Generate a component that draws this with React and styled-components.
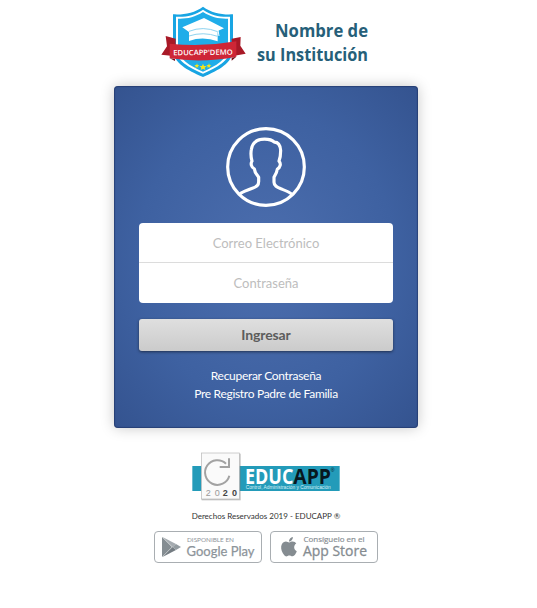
import React from "react";
import styled, { createGlobalStyle } from "styled-components";

const GlobalStyle = createGlobalStyle`
  *, *::before, *::after { box-sizing: border-box; }
  body { margin: 0; background: #fff; font-family: Lato, "Liberation Sans", sans-serif; }
  svg { display: block; flex: none; overflow: visible; }
`;

const Page = styled.main`
  width: 532px;
  height: 608px;
  display: flex;
  flex-direction: column;
  align-items: center;
`;

const Header = styled.header`
  height: 86px;
  width: 222px;
  display: flex;
  padding-top: 2px;
`;

const Card = styled.form`
  width: 304px;
  height: 342px;
  display: flex;
  flex-direction: column;
  align-items: center;
  padding: 41px 25px 0;
  border-radius: 4px;
  background: radial-gradient(ellipse farthest-corner at center, #4c6eae 0%, #3e61a1 60%, #34538f 100%);
  box-shadow: inset 0 0 1px 1px rgba(27, 46, 92, 0.55), 0 0 14px rgba(0, 0, 0, 0.22);
`;

const Fields = styled.div`
  width: 254px;
  height: 80px;
  margin-top: 16px;
  background: #fff;
  border-radius: 4px;
  overflow: hidden;
`;

const Field = styled.input`
  display: block;
  width: 100%;
  height: 40px;
  padding: 0 8px;
  border: 0;
  border-bottom: ${(p) => (p.$divided ? "1px solid #dcdcdc" : "0")};
  outline: none;
  background: transparent;
  text-align: center;
  font: 13px Lato, sans-serif;
  color: #555;
  &::placeholder { color: #bdbdbd; opacity: 1; }
`;

const SubmitButton = styled.button`
  width: 254px;
  height: 32px;
  margin-top: 16px;
  padding: 0 0 2px;
  border: 0;
  border-radius: 3px;
  background: linear-gradient(#dfdfdf, #cbcbcb);
  box-shadow: 0 1px 3px rgba(0, 0, 0, 0.5);
  font: bold 14px Lato, sans-serif;
  letter-spacing: -0.1px;
  color: #5c5c5c;
`;

const Links = styled.nav`
  display: flex;
  flex-direction: column;
  align-items: center;
  margin-top: 16px;
`;

const CardLink = styled.a`
  font-size: 12px;
  line-height: 18px;
  letter-spacing: -0.3px;
  color: #fff;
`;

const Footer = styled.footer`
  display: flex;
  flex-direction: column;
  align-items: center;
  padding-top: 24px;
`;

const Copyright = styled.p`
  margin: 6px 0 0;
  font-size: 8px;
  line-height: 12px;
  color: #333;
`;

const Stores = styled.div`
  display: flex;
  gap: 8px;
  margin-top: 9px;
`;

const StoreBadge = styled.a`
  width: 108px;
  height: 32px;
  border: 1px solid #a9aeb2;
  border-radius: 4px;
  background: #fff;
`;

function Emblem() {
  return (
    <svg width="100" height="82" viewBox="2 6 300 246">
      <path d="M146 20C120 39 88 45 56 43V150C58 190 98 210 146 231C194 210 234 190 236 150V43C204 45 172 39 146 20Z" fill="#18a5e3" />
      <path d="M146 29C121 46 94 52 65 50V150C67 182 102 202 146 221C190 202 225 182 227 150V50C198 52 171 46 146 29Z" fill="#fff" />
      <path d="M146 36C121 52 96 57 71 56V150C74 178 106 197 146 215C186 197 218 178 221 150V56C196 57 171 52 146 36Z" fill="#20ade9" />
      <path d="M84 82L149 54L209 85L190 93V124Q146 108 104 123V96Z" fill="#fff" />
      <path d="M104 94Q146 77 190 95M104 108Q146 94 190 109" fill="none" stroke="#8fd3ef" strokeWidth="3" />
      <path d="M191 90L194 108" stroke="#fff" strokeWidth="3" />
      <path d="M34 108L64 116V169L21 164L38 139Z" fill="#a81927" />
      <path d="M259 111L232 116V169L274 161L258 137Z" fill="#a81927" />
      <path d="M46 131Q146 142 246 124V170Q146 190 46 175Z" fill="#ce2636" />
      <path d="M46 175L62 177V183ZM246 170L232 173V182Z" fill="#74101b" />
      <text x="57" y="165" fontFamily="Open Sans, sans-serif" fontWeight="600" fontSize="22" fill="#fff" textLength="178" lengthAdjust="spacingAndGlyphs" transform="rotate(-.7 146 160)">EDUCAPP'DEMO</text>
      <g fill="#f5e51b">
        <path d="M146 191L149 198L157 198L151 203L153 210L146 206L139 210L141 203L135 198L143 198Z" />
        <path d="M128 190L130 195L135 195L131 199L132 204L128 201L123 204L124 199L120 195L126 195Z" />
        <path d="M164 190L166 195L171 195L167 199L168 204L164 201L159 204L160 199L156 195L162 195Z" />
      </g>
    </svg>
  );
}

function Wordmark() {
  return (
    <svg width="122" height="78" viewBox="0 0 122 78" fontFamily="Open Sans, sans-serif" fontWeight="700" fontSize="18.5" fill="#265f79">
      <text x="20" y="35" textLength="93" lengthAdjust="spacingAndGlyphs">Nombre de</text>
      <text x="2" y="59" textLength="111" lengthAdjust="spacingAndGlyphs">su Institución</text>
    </svg>
  );
}

function Avatar() {
  return (
    <svg width="80" height="80" viewBox="33 20.5 240 240" fill="none" stroke="#fff" strokeWidth="9.5">
      <circle cx="153" cy="140.500" r="115" />
      <path d="M73 223C82 214 96 211 108 206C126 199 131 196 131 184V171C123 161 119 157 118 146C109 142 106 130 111 123C108 112 107 99 109 88C112 66 126 57 149 57C164 57 172 60 178 66C191 66 196 78 197 91C197 105 195 115 192 123C199 130 196 142 187 147C186 157 182 163 177 171V186C177 197 186 201 198 206C211 211 223 215 232 223" strokeLinejoin="round" />
    </svg>
  );
}

function EducappLogo() {
  return (
    <svg width="150" height="52" viewBox="34 21 450 156">
      <rect x="38" y="63" width="442" height="75" fill="#239bb9" />
      <rect x="66" y="26" width="117" height="140" fill="#777" opacity=".45" />
      <rect x="65" y="24" width="114" height="138" fill="#fafafa" stroke="#b8b8b8" strokeWidth="2" />
      <path d="M139 56A37 37 0 1 0 149 92" fill="none" stroke="#a2a2a2" strokeWidth="6" />
      <path d="M148 40V66H120" fill="none" stroke="#a2a2a2" strokeWidth="6" />
      <g fontFamily="Liberation Sans, sans-serif" fontSize="27">
        <text x="78" y="153" fill="#999" textLength="42">20</text>
        <text x="129" y="153" fill="#444" fontWeight="700" textLength="43">20</text>
      </g>
      <g fontFamily="Open Sans, sans-serif" fontWeight="700" fontSize="62">
        <text x="196" y="116" fill="#fff" textLength="145" lengthAdjust="spacingAndGlyphs">EDUC</text>
        <text x="341" y="116" fill="#07171e" textLength="113" lengthAdjust="spacingAndGlyphs">APP</text>
      </g>
      <text x="453" y="80" fontFamily="Liberation Sans, sans-serif" fontSize="15" fill="#07171e">®</text>
      <text x="198" y="133" fontFamily="Liberation Sans, sans-serif" fontSize="14" fill="#d9f1f7" textLength="255" lengthAdjust="spacingAndGlyphs">Control, Administración y Comunicación</text>
    </svg>
  );
}

function GooglePlay() {
  return (
    <svg width="106" height="30" viewBox="0 0 106 30">
      <path d="M7 5V25L17 15Z" fill="#858d92" />
      <path d="M7.500 5L21 12L17.500 15Z" fill="#a5abb0" />
      <path d="M7.500 25L21 18L17.500 15Z" fill="#747c82" />
      <path d="M21 12L26 15L21 18L17.500 15Z" fill="#939ba0" />
      <g fill="#8d949a">
        <text x="32" y="10" fontFamily="Lato, sans-serif" fontSize="6.500" textLength="47" lengthAdjust="spacingAndGlyphs">DISPONIBLE EN</text>
        <text x="31.500" y="23.500" fontFamily="Lato, sans-serif" fontSize="14" stroke="#8d949a" strokeWidth=".25" textLength="68" lengthAdjust="spacingAndGlyphs">Google Play</text>
      </g>
    </svg>
  );
}

function AppStore() {
  return (
    <svg width="106" height="30" viewBox="0 0 106 30" fill="#858c91">
      <path transform="translate(5.600 1.700) scale(1.030 1.080)" d="M17.050 20.280c-.980.950-2.050.800-3.080.350-1.090-.460-2.090-.480-3.240 0-1.440.620-2.200.440-3.060-.350C2.790 15.250 3.510 7.590 9.050 7.310c1.350.070 2.290.740 3.080.800 1.180-.240 2.310-.930 3.570-.840 1.510.120 2.650.720 3.400 1.800-3.120 1.870-2.380 5.980.480 7.130-.570 1.500-1.310 2.990-2.530 4.080zM12.030 7.250c-.150-2.230 1.660-4.070 3.740-4.250.290 2.580-2.340 4.500-3.740 4.250z" />
      <text x="32.500" y="9.800" fontFamily="Open Sans, sans-serif" fontSize="7" stroke="#858c91" strokeWidth=".15" textLength="61" lengthAdjust="spacingAndGlyphs">Consíguelo en el</text>
      <text x="32" y="23.800" fontFamily="Open Sans, sans-serif" fontSize="14.500" stroke="#858c91" strokeWidth=".3" textLength="64" lengthAdjust="spacingAndGlyphs">App Store</text>
    </svg>
  );
}

export default function App() {
  return (
    <>
      <GlobalStyle />
      <Page>
        <Header>
          <Emblem />
          <Wordmark />
        </Header>
        <Card>
          <Avatar />
          <Fields>
            <Field $divided type="email" placeholder="Correo Electrónico" />
            <Field type="password" placeholder="Contraseña" />
          </Fields>
          <SubmitButton type="button">Ingresar</SubmitButton>
          <Links>
            <CardLink>Recuperar Contraseña</CardLink>
            <CardLink>Pre Registro Padre de Familia</CardLink>
          </Links>
        </Card>
        <Footer>
          <EducappLogo />
          <Copyright>Derechos Reservados 2019 - EDUCAPP ®</Copyright>
          <Stores>
            <StoreBadge><GooglePlay /></StoreBadge>
            <StoreBadge><AppStore /></StoreBadge>
          </Stores>
        </Footer>
      </Page>
    </>
  );
}
